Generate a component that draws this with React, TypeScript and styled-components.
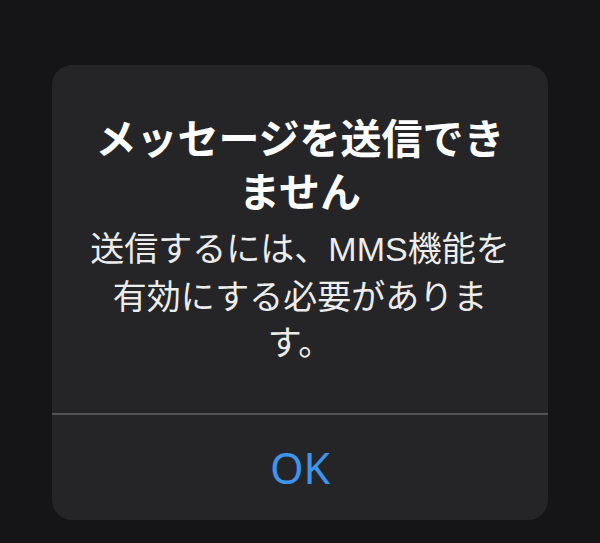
import styled, { createGlobalStyle } from 'styled-components'

const GlobalStyle = createGlobalStyle`
  html, body {
    margin: 0;
    padding: 0;
    background: #151517;
  }
  #root {
    width: 600px;
    height: 543px;
  }
`

const Screen = styled.div`
  width: 600px;
  height: 543px;
  box-sizing: border-box;
  padding: 65px 52px 23px;
  background: #151517;
  font-family: 'Noto Sans CJK JP', 'Noto Sans', sans-serif;
`

const Alert = styled.div`
  display: flex;
  flex-direction: column;
  height: 100%;
  background: #252527;
  border-radius: 20px;
  overflow: hidden;
`

const Body = styled.div`
  display: flex;
  flex-direction: column;
  align-items: center;
  padding: 45px 30px 49px;
  text-align: center;
`

const Title = styled.h2`
  margin: 0;
  color: #ffffff;
  font-size: 41px;
  font-weight: 700;
  line-height: 53px;
`

const Message = styled.p`
  margin: 8px 0 0;
  color: #ececec;
  font-size: 34px;
  font-weight: 400;
  line-height: 46px;
  line-break: strict;

  span {
    font-family: 'Liberation Sans', 'Noto Sans', sans-serif;
  }
`

const Divider = styled.div`
  height: 2px;
  background: #545456;
`

const ActionButton = styled.button`
  flex: 1;
  display: flex;
  align-items: center;
  justify-content: center;
  border: 0;
  background: transparent;
  color: #3d95ec;
  font-family: 'Noto Sans', 'Liberation Sans', sans-serif;
  font-size: 43px;
  padding: 0;
  cursor: pointer;
`

export default function App() {
  return (
    <>
      <GlobalStyle />
      <Screen>
        <Alert>
          <Body>
            <Title>メッセージを送信できません</Title>
            <Message>
              送信するには、<span>MMS</span>機能を有効にする必要があります。
            </Message>
          </Body>
          <Divider />
          <ActionButton>OK</ActionButton>
        </Alert>
      </Screen>
    </>
  )
}
